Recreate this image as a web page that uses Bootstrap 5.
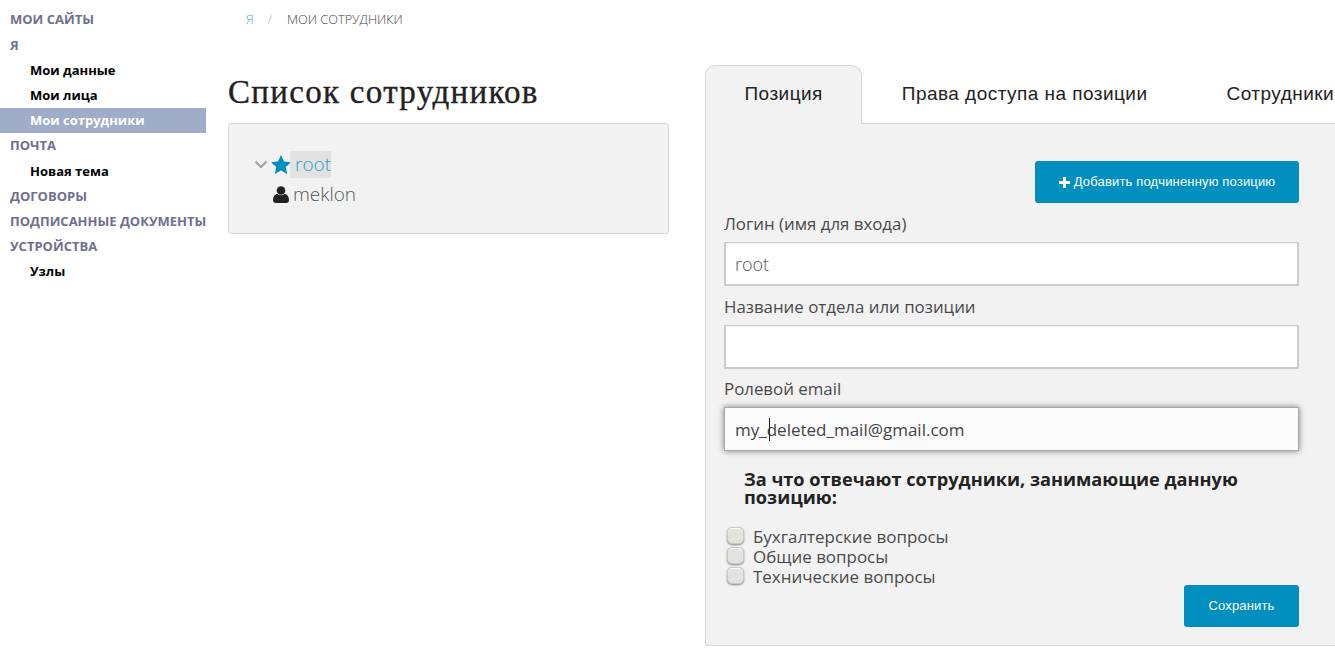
<!DOCTYPE html>
<html lang="ru">
<head>
<meta charset="utf-8">
<title>Список сотрудников</title>
<link href="https://cdn.jsdelivr.net/npm/bootstrap@5.3.0/dist/css/bootstrap.min.css" rel="stylesheet">
<style>
html,body{height:649px;overflow:hidden}
body{font-family:"Open Sans",sans-serif;color:#4a4a4a;background:#fff}
.shell{height:649px;overflow:hidden}
.side{width:206px;flex:none;padding-top:7.4px;font-size:13px;font-weight:700}
.side a{display:block;height:25.2px;line-height:25px;text-decoration:none;white-space:nowrap}
.side .top-item{padding-left:10px;color:#6f6f8e}
.side .sub-item{padding-left:30px;color:#000}
.side .sub-item.on{background:#9fadc9;color:#fff}
.main-area{margin-left:22px;min-width:0;flex:1;overflow:hidden}
.crumbs{height:65px;padding:11px 0 0 18px;font-size:12.75px;line-height:16px;margin:0;font-weight:300}
.crumbs .breadcrumb-item a{color:#3fa9c6;text-decoration:none}
.crumbs .breadcrumb-item.active{color:#444}
.crumbs .breadcrumb-item+.breadcrumb-item{padding-left:14px}
.crumbs .breadcrumb-item+.breadcrumb-item::before{padding-right:15px;color:#aaa}
.left-col{width:441px;flex:none}
.page-title{font-family:"Liberation Serif",serif;font-size:33px;line-height:40px;font-weight:400;color:#222;letter-spacing:1.3px;margin:7px 0 11px;-webkit-text-stroke:.35px #222}
.tree-box{height:111px;background:#f2f2f2;border:1px solid #d8d8d8;border-radius:3px;padding:25px 0 0 25px;font-size:19px;font-weight:300;line-height:30px}
.tree-row{height:30px}
.tree-row svg{flex:none}
.tree-child{padding-left:19px}
.star-ico{margin-left:3px}
.node-on{background:#e2e2e2;color:#2a9cc2;padding:0 0 0 5px;margin-left:-1px;height:27px;line-height:27px;margin-top:1px}
.node-off{color:#555;margin-left:4px}
.right-col{margin-left:36px;flex:1;min-width:0;overflow:hidden}
.tabs-line{height:59px;border-bottom:1px solid #d8d8d8;flex-wrap:nowrap;font-family:"Liberation Sans",sans-serif;font-size:19px}
.tabs-line .nav-link{height:59px;line-height:56px;padding:0 38.5px;color:#222;border:1px solid transparent;border-radius:10px 10px 0 0;margin:0;white-space:nowrap;letter-spacing:.46px}
.tabs-line .nav-link.active{background:#f2f2f2;border-color:#d8d8d8 #d8d8d8 #f2f2f2;color:#222}
.tab-body{height:522px;background:#f2f2f2;border:1px solid #d8d8d8;border-width:0 0 1px 1px;border-radius:0 0 0 3px;padding:37px 0 0 18px}
.tab-inner{width:575px}
.act-btn{background:#008fbe;color:#fff;border:0;border-radius:3px;font-family:"Liberation Sans",sans-serif;font-size:13px;height:42px;line-height:42px;padding:0;letter-spacing:.16px}
.act-btn:hover{background:#008fbe;color:#fff}
.add-btn{width:264px}
.save-btn{width:115px}
.add-row{margin-bottom:10px}
.fld-label{font-size:16.85px;line-height:22px;margin:0 0 7px;color:#4a4a4a;display:block}
.fld-input{height:44px;border:2px solid #ccc;border-width:1px 2px 2px 2px;border-radius:0;padding:0 9px;font-size:18px;font-weight:300;color:#555;background:#fff;margin-bottom:9.5px;box-shadow:inset 0 1px 1px rgba(0,0,0,.06)}
.fld-input.focused{border:1px solid #aaa;background:#fafafa;box-shadow:0 0 6px rgba(0,0,0,.5);color:#444;font-weight:400;font-size:17px;padding:0 10px}
.caret-mark{position:absolute;left:45px;top:11px;width:1px;height:23px;background:#222}
.duty-title{font-size:18.15px;line-height:18px;font-weight:700;color:#222;margin:19px 0 21px 20px}
.duty-row{height:20px;margin:0;font-size:16.95px;line-height:20px}
.box-mark{width:17px;height:17px;flex:none;margin:-4px 0 0 3px;border-radius:5px;background:#e4e2df;border:1px solid #c9c9c9;box-shadow:0 1px 2px rgba(0,0,0,.45),inset 0 1px 1px #fff}
.duty-row .duty-text{margin-left:9px}
.save-row{margin-top:-2px}
</style>
</head>
<body>
<div class="shell d-flex">
  <nav class="side">
    <a class="top-item" href="#">МОИ САЙТЫ</a>
    <a class="top-item" href="#">Я</a>
    <a class="sub-item" href="#">Мои данные</a>
    <a class="sub-item" href="#">Мои лица</a>
    <a class="sub-item on" href="#">Мои сотрудники</a>
    <a class="top-item" href="#">ПОЧТА</a>
    <a class="sub-item" href="#">Новая тема</a>
    <a class="top-item" href="#">ДОГОВОРЫ</a>
    <a class="top-item" href="#">ПОДПИСАННЫЕ ДОКУМЕНТЫ</a>
    <a class="top-item" href="#">УСТРОЙСТВА</a>
    <a class="sub-item" href="#">Узлы</a>
  </nav>
  <div class="main-area">
    <ol class="breadcrumb crumbs">
      <li class="breadcrumb-item"><a href="#">Я</a></li>
      <li class="breadcrumb-item active">МОИ СОТРУДНИКИ</li>
    </ol>
    <div class="d-flex">
      <div class="left-col">
        <h1 class="page-title">Список сотрудников</h1>
        <div class="tree-box">
          <div class="tree-row d-flex align-items-center">
            <svg width="14" height="9" viewBox="0 0 14 9"><path d="M1.5 1.5 7 7l5.5-5.5" fill="none" stroke="#a3a3a3" stroke-width="2.2"/></svg>
            <svg class="star-ico" width="20" height="19" viewBox="0 0 24 23"><path d="M12 0l3.6 7.8 8.4 1-6.200 5.800 1.700 8.400L12 18.800 4.500 23l1.700-8.400L0 8.800l8.400-1z" fill="#008fbe"/></svg>
            <span class="node-on">root</span>
          </div>
          <div class="tree-row tree-child d-flex align-items-center">
            <svg width="16" height="17" viewBox="0 0 16 17"><circle cx="8" cy="4.500" r="4.300" fill="#222"/><path d="M0 14c0-4 2.500-6 4.500-6 1 .8 2.200 1.200 3.500 1.200S10.500 8.800 11.500 8c2 0 4.500 2 4.500 6 0 2-1.200 3-2.800 3H2.800C1.200 17 0 16 0 14z" fill="#222"/></svg>
            <span class="node-off">meklon</span>
          </div>
        </div>
      </div>
      <div class="right-col">
        <ul class="nav nav-tabs tabs-line">
          <li class="nav-item"><a class="nav-link active" href="#">Позиция</a></li>
          <li class="nav-item"><a class="nav-link" href="#">Права доступа на позиции</a></li>
          <li class="nav-item"><a class="nav-link" href="#">Сотрудники</a></li>
        </ul>
        <div class="tab-body">
          <form class="tab-inner">
            <div class="d-flex justify-content-end add-row">
              <button type="button" class="btn act-btn add-btn"><svg width="11" height="11" viewBox="0 0 11 11" class="me-1"><path d="M4 0h3v4h4v3H7v4H4V7H0V4h4z" fill="#fff"/></svg>Добавить подчиненную позицию</button>
            </div>
            <label class="fld-label">Логин (имя для входа)</label>
            <input class="form-control fld-input" value="root">
            <label class="fld-label">Название отдела или позиции</label>
            <input class="form-control fld-input">
            <label class="fld-label">Ролевой email</label>
            <div class="position-relative">
              <input class="form-control fld-input focused" value="my_deleted_mail@gmail.com">
              <span class="caret-mark"></span>
            </div>
            <p class="duty-title">За что отвечают сотрудники, занимающие данную позицию:</p>
            <div class="duty-row d-flex align-items-center"><span class="box-mark"></span><span class="duty-text">Бухгалтерские вопросы</span></div>
            <div class="duty-row d-flex align-items-center"><span class="box-mark"></span><span class="duty-text">Общие вопросы</span></div>
            <div class="duty-row d-flex align-items-center"><span class="box-mark"></span><span class="duty-text">Технические вопросы</span></div>
            <div class="d-flex justify-content-end save-row">
              <button type="button" class="btn act-btn save-btn">Сохранить</button>
            </div>
          </form>
        </div>
      </div>
    </div>
  </div>
</div>
<script src="https://cdn.jsdelivr.net/npm/bootstrap@5.3.0/dist/js/bootstrap.bundle.min.js"></script>
</body>
</html>
